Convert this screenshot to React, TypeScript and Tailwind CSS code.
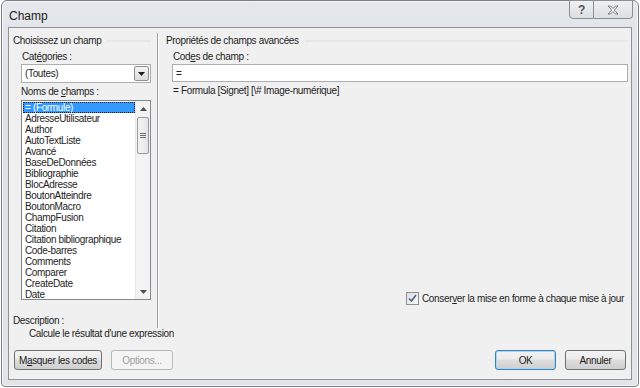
const FIELDS = [
  "= (Formule)",
  "AdresseUtilisateur",
  "Author",
  "AutoTextListe",
  "Avancé",
  "BaseDeDonnées",
  "Bibliographie",
  "BlocAdresse",
  "BoutonAtteindre",
  "BoutonMacro",
  "ChampFusion",
  "Citation",
  "Citation bibliographique",
  "Code-barres",
  "Comments",
  "Comparer",
  "CreateDate",
  "Date",
];

const font = "font-['Liberation_Sans',Arial,sans-serif]";

function Button({
  label,
  mnemonic,
  width,
  isDefault,
  disabled,
}: {
  label: string;
  mnemonic?: number;
  width: string;
  isDefault?: boolean;
  disabled?: boolean;
}) {
  const border = disabled
    ? "border-[#b5b9bc]"
    : isDefault
      ? "border-[#3c7fb1] shadow-[inset_0_0_0_1px_#a6d5f5]"
      : "border-[#707070]";
  const bg = disabled
    ? "bg-[#f4f4f4]"
    : "bg-[linear-gradient(#f2f2f2,#ebebeb_45%,#dddddd_50%,#cfcfcf)]";
  return (
    <div
      className={`${width} h-[20px] flex items-center justify-center whitespace-nowrap rounded-[3px] border ${border} ${bg} ${
        disabled ? "text-[#a0a0a0]" : "text-[#1e1e1e]"
      }`}
    >
      {mnemonic !== undefined ? (
        <span>
          {label.slice(0, mnemonic)}
          <span className="underline">{label[mnemonic]}</span>
          {label.slice(mnemonic + 1)}
        </span>
      ) : (
        label
      )}
    </div>
  );
}

function GroupTitle({ text }: { text: string }) {
  return (
    <div className="flex items-center gap-[6px] h-[13px] leading-[13px]">
      <span className="whitespace-nowrap">{text}</span>
      <div className="flex-1 h-[2px] bg-[#e7e7e7]" />
    </div>
  );
}

function ScrollBar() {
  return (
    <div className="w-[15px] h-full flex flex-col bg-[#f3f3f3] border-l border-[#e8e8e8]">
      <div className="h-[15px] flex items-center justify-center">
        <svg width="7" height="4" viewBox="0 0 7 4">
          <path d="M0 4 L3.5 0 L7 4 Z" fill="#4d4d4d" />
        </svg>
      </div>
      <div className="mx-[1px] mt-[1px] h-[37px] rounded-[2px] border border-[#9a9a9a] bg-[linear-gradient(90deg,#f4f4f4,#e4e4e4)] flex flex-col items-center justify-center gap-[1px]">
        <div className="w-[6px] h-[1px] bg-[#6d6d6d]" />
        <div className="w-[6px] h-[1px] bg-[#6d6d6d]" />
        <div className="w-[6px] h-[1px] bg-[#6d6d6d]" />
      </div>
      <div className="flex-1" />
      <div className="h-[15px] flex items-center justify-center">
        <svg width="7" height="4" viewBox="0 0 7 4">
          <path d="M0 0 L3.5 4 L7 0 Z" fill="#4d4d4d" />
        </svg>
      </div>
    </div>
  );
}

export default function App() {
  return (
    <div className={`w-[640px] h-[388px] bg-white ${font} text-[10px] tracking-[-0.35px] text-[#1e1e1e]`}>
      <div className="w-[638px] h-[387px] ml-[1px] rounded-t-[6px] rounded-b-[4px] border border-[#7a7f86] bg-[linear-gradient(180deg,#e4e7eb,#dde1e6_30%,#e2e4e7)] flex flex-col shadow-[inset_0_0_0_1px_#f4f6f8]">
        {/* title bar */}
        <div className="h-[26px] flex items-start justify-between">
          <div className="pl-[7px] pt-[8px] text-[12px] tracking-normal leading-[14px] text-[#1b1b1b]">Champ</div>
          <div className="flex mr-[5px] -mt-[1px]">
            <div className="w-[25px] h-[19px] border border-[#8c8f94] rounded-bl-[4px] bg-[linear-gradient(#eef0f2,#dcdfe3)] flex items-center justify-center">
              <span className="text-[12px] leading-none text-[#555] font-bold">?</span>
            </div>
            <div className="w-[39px] h-[19px] border border-l-0 border-[#8c8f94] rounded-br-[4px] bg-[linear-gradient(#eef0f2,#dcdfe3)] flex items-center justify-center">
              <svg width="12" height="10" viewBox="0 0 12 10">
                <path
                  d="M1 1 L3.5 1 L6 3.5 L8.5 1 L11 1 L7.3 5 L11 9 L8.5 9 L6 6.5 L3.5 9 L1 9 L4.7 5 Z"
                  fill="#f6f6f6"
                  stroke="#6a6e74"
                  strokeWidth="0.9"
                />
              </svg>
            </div>
          </div>
        </div>

        {/* client area */}
        <div className="mx-[6px] h-[353px] border border-[#8e9297] bg-[#f0f0f0] flex flex-col">
          <div className="flex h-[286px] pt-[6px]">
            {/* left group */}
            <div className="w-[148px] pl-[4px] pr-[6px] flex flex-col">
              <GroupTitle text="Choisissez un champ" />
              <div className="ml-[9px] mt-[3px] leading-[13px]">
                Cat<span className="underline">é</span>gories :
              </div>
              <div className="ml-[8px] mt-[1px] h-[19px] border border-[#abadb3] bg-white flex items-center">
                <span className="flex-1 pl-[3px]">(Toutes)</span>
                <div className="w-[15px] h-[15px] mr-[1px] border border-[#8e8f8f] rounded-[2px] bg-[linear-gradient(#f2f2f2,#dcdcdc)] flex items-center justify-center">
                  <svg width="7" height="4" viewBox="0 0 7 4">
                    <path d="M0 0 L3.5 4 L7 0 Z" fill="#1e1e1e" />
                  </svg>
                </div>
              </div>
              <div className="ml-[8px] mt-[2px] leading-[13px]">
                Noms de <span className="underline">c</span>hamps :
              </div>
              <div className="ml-[8px] mt-[2px] h-[200px] border border-[#828790] bg-white flex">
                <div className="flex-1 flex flex-col pt-[1px] pl-[1px] overflow-hidden">
                  {FIELDS.map((f, i) => (
                    <div
                      key={f}
                      className={`h-[11px] leading-[11px] pl-[2px] whitespace-nowrap ${
                        i === 0
                          ? "bg-[#3399ff] text-white outline-1 outline-dotted outline-[#1b1b1b] -outline-offset-1"
                          : ""
                      }`}
                    >
                      {f}
                    </div>
                  ))}
                </div>
                <ScrollBar />
              </div>
            </div>

            {/* separator */}
            <div className="w-[2px] mt-[-1px] mb-[-14px] flex">
              <div className="w-[1px] bg-[#a0a0a0]" />
              <div className="w-[1px] bg-white" />
            </div>

            {/* right group */}
            <div className="flex-1 pl-[7px] pr-[3px] flex flex-col">
              <GroupTitle text="Propriétés de champs avancées" />
              <div className="ml-[7px] mt-[3px] leading-[13px]">
                Cod<span className="underline">e</span>s de champ :
              </div>
              <div className="ml-[6px] mt-[1px] h-[18px] border border-[#abadb3] bg-white flex items-center pl-[3px]">
                =
              </div>
              <div className="ml-[7px] mt-[2px] leading-[13px]">
                = Formula [Signet] [\# Image-numérique]
              </div>
              <div className="flex-1" />
              <div className="flex items-center justify-end gap-[3px] mb-[9px] pr-[4px]">
                <div className="w-[13px] h-[13px] border border-[#8f8f8f] bg-[linear-gradient(135deg,#dcdcdc,#fbfbfb)] flex items-center justify-center">
                  <svg width="9" height="9" viewBox="0 0 9 9">
                    <path d="M1 4.5 L3.5 7 L8 1" fill="none" stroke="#4a5f8a" strokeWidth="1.6" />
                  </svg>
                </div>
                <span className="leading-[13px]">
                  Conser<span className="underline">v</span>er la mise en forme à chaque mise à jour
                </span>
              </div>
            </div>
          </div>

          {/* description */}
          <div className="pl-[4px] leading-[13px]">Description :</div>
          <div className="pl-[20px] leading-[13px]">Calcule le résultat d'une expression</div>

          {/* buttons */}
          <div className="flex items-center mt-[10px] px-[5px]">
            <Button label="Masquer les codes" mnemonic={1} width="w-[88px]" />
            <div className="w-[9px]" />
            <Button label="Options..." width="w-[62px]" disabled />
            <div className="flex-1" />
            <Button label="OK" width="w-[61px]" isDefault />
            <div className="w-[9px]" />
            <Button label="Annuler" width="w-[61px]" />
          </div>
        </div>
      </div>
    </div>
  );
}
